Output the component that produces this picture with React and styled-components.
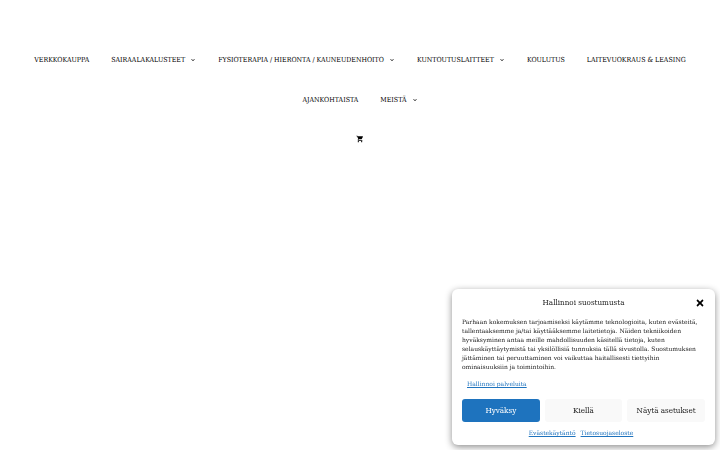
import React, { useState } from 'react'
import styled, { createGlobalStyle, css } from 'styled-components'
import { MdShoppingCart } from 'react-icons/md'

const GlobalStyle = createGlobalStyle`
  * {
    box-sizing: border-box;
  }
  body {
    margin: 0;
    background: #fff;
    color: #222;
    font-family: 'DejaVu Serif', serif;
  }
`

const Header = styled.header`
  padding: 40px 20px 0;
`

const Nav = styled.nav`
  display: flex;
  flex-direction: column;
  align-items: center;
`

const Menu = styled.ul`
  display: flex;
  flex-wrap: wrap;
  justify-content: center;
  column-gap: 2px;
  margin: 0;
  padding: 0;
  list-style: none;
`

const MenuLink = styled.a`
  display: flex;
  align-items: center;
  gap: 5px;
  padding: 0 10px;
  font-family: 'DejaVu Serif Condensed', 'DejaVu Serif', serif;
  font-size: 7px;
  line-height: 40px;
  color: #000;
  text-decoration: none;
  text-transform: uppercase;
  white-space: nowrap;
`

const Chevron = styled.svg`
  width: 6px;
  height: 6px;
  fill: currentColor;
`

const CartLink = styled.a`
  display: flex;
  align-items: center;
  height: 38px;
  padding: 0 10px;
  color: #000;
`

const CartIcon = styled(MdShoppingCart)`
  width: 8px;
  height: 8px;
`

const Banner = styled.section`
  position: fixed;
  right: 5px;
  bottom: 5px;
  width: 263px;
  max-width: calc(100% - 10px);
  padding: 8px 10px;
  border-radius: 6px;
  background: #fff;
  box-shadow: 0 2px 7px rgba(0, 0, 0, 0.45);
`

const BannerHeader = styled.div`
  display: grid;
  grid-template-columns: 1fr auto 1fr;
  align-items: center;
`

const BannerTitle = styled.h2`
  grid-column: 2;
  margin: 0;
  font-family: 'DejaVu Serif Condensed', 'DejaVu Serif', serif;
  font-size: 8px;
  font-weight: 400;
  line-height: 11px;
`

const CloseButton = styled.button`
  display: flex;
  justify-self: end;
  padding: 0;
  border: 0;
  background: none;
  color: #000;
  cursor: pointer;
`

const CloseIcon = styled.svg`
  width: 10px;
  height: 10px;
  fill: currentColor;
`

const Message = styled.p`
  margin: 9px 0 0;
  font-size: 6px;
  line-height: 9px;
`

const linkStyle = css`
  color: #1e73be;
  font-size: 6px;
  line-height: 9px;
  text-decoration: underline;
`

const ServicesLink = styled.a`
  ${linkStyle}
  display: block;
  width: fit-content;
  margin: 8px 5px 0;
`

const Buttons = styled.div`
  display: grid;
  grid-template-columns: repeat(3, 1fr);
  gap: 5px;
  margin-top: 11px;
`

const ConsentButton = styled.button`
  height: 23px;
  padding: 0;
  border: 0;
  border-radius: 3px;
  background: ${({ $primary }) => ($primary ? '#1e73be' : '#f9f9f9')};
  color: ${({ $primary }) => ($primary ? '#fff' : '#222')};
  font-family: 'DejaVu Serif Condensed', 'DejaVu Serif', serif;
  font-size: 8px;
  white-space: nowrap;
  cursor: pointer;
`

const Documents = styled.div`
  display: flex;
  justify-content: center;
  margin-top: 6px;
`

const DocumentLink = styled.a`
  ${linkStyle}
  margin-right: 5px;
`

const menuItems = [
  { label: 'Verkkokauppa' },
  { label: 'Sairaalakalusteet', dropdown: true },
  { label: 'Fysioterapia / Hieronta / Kauneudenhoito', dropdown: true },
  { label: 'Kuntoutuslaitteet', dropdown: true },
  { label: 'Koulutus' },
  { label: 'Laitevuokraus & Leasing' },
  { label: 'Ajankohtaista' },
  { label: 'Meistä', dropdown: true },
]

const CookieBanner = () => {
  const [open, setOpen] = useState(true)
  if (!open) return null
  const close = () => setOpen(false)

  return (
    <Banner role="dialog" aria-labelledby="consent-title">
      <BannerHeader>
        <BannerTitle id="consent-title">Hallinnoi suostumusta</BannerTitle>
        <CloseButton type="button" aria-label="Sulje" onClick={close}>
          <CloseIcon viewBox="0 0 352 512" aria-hidden="true">
            <path d="M242.72 256l100.07-100.07c12.28-12.28 12.28-32.19 0-44.48l-22.24-22.24c-12.28-12.28-32.19-12.28-44.48 0L176 189.28 75.93 89.21c-12.28-12.28-32.19-12.28-44.48 0L9.21 111.45c-12.28 12.28-12.28 32.19 0 44.48L109.28 256 9.21 356.07c-12.28 12.28-12.28 32.19 0 44.48l22.24 22.24c12.28 12.28 32.2 12.28 44.48 0L176 322.72l100.07 100.07c12.28 12.28 32.2 12.28 44.48 0l22.24-22.24c12.28-12.28 12.28-32.19 0-44.48L242.72 256z" />
          </CloseIcon>
        </CloseButton>
      </BannerHeader>
      <Message>
        Parhaan kokemuksen tarjoamiseksi käytämme teknologioita, kuten evästeitä,
        tallentaaksemme ja/tai käyttääksemme laitetietoja. Näiden tekniikoiden
        hyväksyminen antaa meille mahdollisuuden käsitellä tietoja, kuten
        selauskäyttäytymistä tai yksilöllisiä tunnuksia tällä sivustolla. Suostumuksen
        jättäminen tai peruuttaminen voi vaikuttaa haitallisesti tiettyihin
        ominaisuuksiin ja toimintoihin.
      </Message>
      <ServicesLink href="#palvelut">Hallinnoi palveluita</ServicesLink>
      <Buttons>
        <ConsentButton type="button" $primary onClick={close}>Hyväksy</ConsentButton>
        <ConsentButton type="button" onClick={close}>Kiellä</ConsentButton>
        <ConsentButton type="button">Näytä asetukset</ConsentButton>
      </Buttons>
      <Documents>
        <DocumentLink href="#evasteet">Evästekäytäntö</DocumentLink>
        <DocumentLink href="#tietosuoja">Tietosuojaseloste</DocumentLink>
      </Documents>
    </Banner>
  )
}

const App = () => (
  <>
    <GlobalStyle />
    <Header>
      <Nav>
        <Menu>
          {menuItems.map(({ label, dropdown }) => (
            <li key={label}>
              <MenuLink href="#">
                {label}
                {dropdown && (
                  <Chevron viewBox="0 0 330 512" aria-hidden="true">
                    <path d="M305.913 197.085c0 2.266-1.133 4.815-2.833 6.514L171.087 335.593c-1.7 1.7-4.249 2.832-6.515 2.832s-4.815-1.133-6.515-2.832L26.064 203.599c-1.7-1.7-2.832-4.248-2.832-6.514s1.132-4.816 2.832-6.515l14.162-14.163c1.7-1.699 3.966-2.832 6.515-2.832 2.266 0 4.815 1.133 6.515 2.832l111.316 111.317 111.316-111.317c1.7-1.699 4.249-2.832 6.515-2.832s4.815 1.133 6.515 2.832l14.162 14.163c1.7 1.7 2.833 4.249 2.833 6.515z" />
                  </Chevron>
                )}
              </MenuLink>
            </li>
          ))}
        </Menu>
        <CartLink href="#ostoskori" aria-label="Ostoskori">
          <CartIcon aria-hidden="true" />
        </CartLink>
      </Nav>
    </Header>
    <CookieBanner />
  </>
)

export default App
